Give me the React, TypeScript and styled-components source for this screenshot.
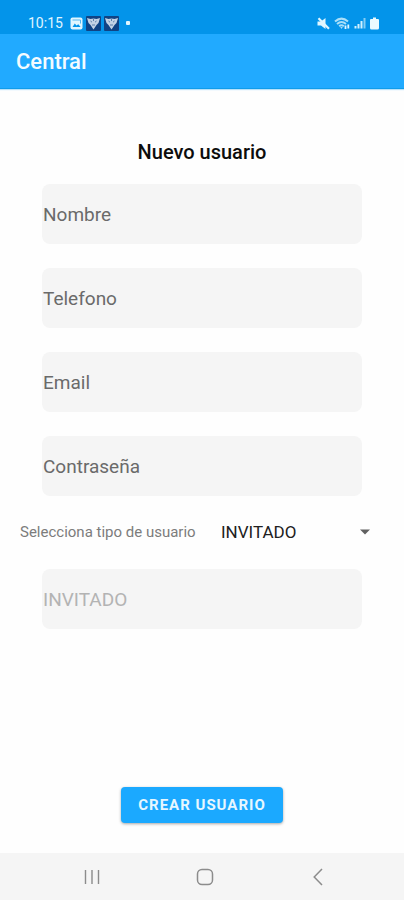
import React, { useState } from "react";
import styled, { createGlobalStyle } from "styled-components";

const GlobalStyle = createGlobalStyle`
  *, *::before, *::after { box-sizing: border-box; }
  body { margin: 0; background: #ffffff; font-family: Roboto, sans-serif; }
`;

const Screen = styled.div`
  display: flex;
  flex-direction: column;
  min-height: 100vh;
  background: #fefefe;
`;

const StatusBar = styled.div`
  display: flex;
  align-items: center;
  justify-content: space-between;
  height: 34px;
  padding: 12px 25px 0 28px;
  background: #0394ea;
  color: #e0f6ff;
`;

const StatusGroup = styled.div<{ $gap: number }>`
  display: flex;
  align-items: center;
  gap: ${(p) => p.$gap}px;
`;

const Clock = styled.time`
  font-size: 14px;
  line-height: 20px;
`;

const AppBar = styled.header`
  display: flex;
  align-items: center;
  height: 55px;
  padding: 2px 16px 0;
  background: #21aaff;
  border-bottom: 1px solid #109cea;
  box-shadow: 0 1px 1px #b5e2fb;
`;

const AppTitle = styled.h1`
  margin: 0;
  color: #f4fbff;
  font-size: 22px;
  line-height: 28px;
  font-weight: 500;
`;

const Form = styled.form`
  display: flex;
  flex: 1;
  flex-direction: column;
  align-items: center;
  padding: 51px 0 30px;
`;

const FormTitle = styled.h2`
  margin: 0 0 20px;
  color: #0c0c0c;
  font-size: 20px;
  line-height: 24px;
  font-weight: 500;
`;

const FieldStack = styled.div`
  display: flex;
  flex-direction: column;
  gap: 24px;
  width: 100%;
  padding: 0 42px;
`;

const Field = styled.input`
  width: 100%;
  height: 60px;
  padding: 0 0 0 1px;
  border: 0;
  border-radius: 8px;
  background: #f5f5f5;
  color: #333333;
  font-family: inherit;
  font-size: 19px;

  &::placeholder { color: #6a6a6a; opacity: 1; }
  &:disabled { color: #b3b3b3; }
`;

const TypeRow = styled.div`
  display: flex;
  align-items: center;
  width: 100%;
  height: 73px;
  padding: 0 34px 2px 20px;
`;

const TypeLabel = styled.label`
  flex: none;
  width: 201px;
  color: #7c7c7c;
  font-size: 15px;
  line-height: 20px;
  white-space: nowrap;
`;

const SelectBox = styled.div`
  display: flex;
  flex: 1;
  align-items: center;
  min-width: 0;

  svg { flex: none; margin-left: -12px; pointer-events: none; }
`;

const Select = styled.select`
  flex: 1;
  min-width: 0;
  height: 28px;
  padding: 0 12px 0 0;
  border: 0;
  appearance: none;
  background: transparent;
  color: #202020;
  font-family: inherit;
  font-size: 17px;
`;

const SubmitButton = styled.button`
  height: 36px;
  margin-top: auto;
  padding: 0 17px;
  border: 0;
  border-radius: 4px;
  background: #1ba9ff;
  box-shadow: 0 1px 3px rgba(0, 0, 0, 0.35);
  color: #e6f7ff;
  font-family: inherit;
  font-size: 15px;
  font-weight: 700;
  letter-spacing: 1px;
`;

const NavBar = styled.nav`
  display: grid;
  grid-template-columns: repeat(3, 1fr);
  height: 47px;
  padding: 0 30px 0 35px;
  background: #f5f5f5;
`;

const NavButton = styled.button`
  display: grid;
  place-items: center;
  padding: 0;
  border: 0;
  background: transparent;
  color: #8c8c8c;
`;

const PictureIcon = () => (
  <svg width="13" height="13" viewBox="0 0 13 13" aria-hidden="true">
    <rect x="0.5" y="0.5" width="12" height="12" rx="2" fill="#e0f6ff" />
    <path d="M2.5 10 4.8 6.5 6.5 8.5 8.3 7.2 10.6 10Z" fill="#0394ea" />
    <path d="M2.5 3H10.5V6.5" fill="none" stroke="#57b7f0" />
  </svg>
);

const ShieldIcon = () => (
  <svg width="15" height="15" viewBox="0 0 15 15" aria-hidden="true">
    <rect width="15" height="15" rx="1" fill="#104384" />
    <path d="M1 2 4.5 3 7.5 2.5 10.5 3 14 2 12.5 7 10.5 9 7.5 13.5 4.5 9 2.5 7Z" fill="#c3d2e5" />
    <path d="M4.5 5 6 6.2M10.5 5 9 6.2M6 9H9M7.5 3V5" stroke="#5a7fa9" />
  </svg>
);

const DotIcon = () => (
  <svg width="4" height="4" viewBox="0 0 4 4" aria-hidden="true">
    <rect width="4" height="4" rx="1" fill="#e0f6ff" />
  </svg>
);

const MutedIcon = () => (
  <svg width="13" height="13" viewBox="0 0 13 13" aria-hidden="true">
    <path d="M0.5 4.5H4L8.5 1V12L4 8.5H0.5Z" fill="#e0f6ff" />
    <path d="M1.5 1.2 12 11.7" stroke="#e0f6ff" strokeWidth="2.2" />
  </svg>
);

const WifiIcon = () => (
  <svg width="16" height="13" viewBox="0 0 16 13" fill="none" aria-hidden="true">
    <path d="M1 4.5Q7.5-1.2 14 4.5M3 7Q7.5 3 12 7M5.2 9.3Q7.5 7.3 9.8 9.3" stroke="#a9dff9" strokeWidth="2" />
    <path d="M6.2 10.2H8.8L7.5 11.8Z" fill="#e0f6ff" />
    <path d="M11.5 8.5V12M14.3 7.5V11.5" stroke="#e0f6ff" strokeWidth="1.8" />
  </svg>
);

const SignalIcon = () => (
  <svg width="12" height="12" viewBox="0 0 12 12" aria-hidden="true">
    <path d="M1.5 9V11.5M4.5 7V11.5M7.5 4V11.5" stroke="#d2f1ff" strokeWidth="2" />
    <path d="M10.5 1V11.5" stroke="#83cdf5" strokeWidth="2" />
  </svg>
);

const BatteryIcon = () => (
  <svg width="9" height="13" viewBox="0 0 9 13" aria-hidden="true">
    <path d="M3 0.5H6V2H8Q9 2 9 3V11Q9 12.5 7.5 12.5H1.5Q0 12.5 0 11V3Q0 2 1 2H3Z" fill="#eafaff" />
  </svg>
);

const CaretIcon = () => (
  <svg width="10" height="6" viewBox="0 0 10 6" aria-hidden="true">
    <path d="M0 0.5H10L5 5.5Z" fill="#616161" />
  </svg>
);

const RecentsIcon = () => (
  <svg width="16" height="16" viewBox="0 0 16 16" stroke="currentColor" strokeWidth="1.4" aria-hidden="true">
    <path d="M1.5 1V15M8 1V15M14.5 1V15" />
  </svg>
);

const HomeIcon = () => (
  <svg width="18" height="18" viewBox="0 0 18 18" fill="none" stroke="currentColor" strokeWidth="1.5" aria-hidden="true">
    <rect x="1.5" y="1.5" width="15" height="15" rx="4.5" />
  </svg>
);

const BackIcon = () => (
  <svg width="10" height="18" viewBox="0 0 10 18" fill="none" stroke="currentColor" strokeWidth="1.5" aria-hidden="true">
    <path d="M9 1 1.2 9 9 17" />
  </svg>
);

const fields = [
  { label: "Nombre", type: "text" },
  { label: "Telefono", type: "tel" },
  { label: "Email", type: "email" },
  { label: "Contraseña", type: "password" },
];

export default function App() {
  const [userType, setUserType] = useState("INVITADO");

  return (
    <Screen>
      <GlobalStyle />
      <StatusBar>
        <StatusGroup $gap={7}>
          <Clock>10:15</Clock>
          <StatusGroup $gap={3}>
            <PictureIcon />
            <ShieldIcon />
            <ShieldIcon />
          </StatusGroup>
          <DotIcon />
        </StatusGroup>
        <StatusGroup $gap={4}>
          <MutedIcon />
          <WifiIcon />
          <SignalIcon />
          <BatteryIcon />
        </StatusGroup>
      </StatusBar>
      <AppBar>
        <AppTitle>Central</AppTitle>
      </AppBar>
      <Form onSubmit={(event: React.FormEvent) => event.preventDefault()}>
        <FormTitle>Nuevo usuario</FormTitle>
        <FieldStack>
          {fields.map((field) => (
            <Field key={field.label} type={field.type} placeholder={field.label} aria-label={field.label} />
          ))}
        </FieldStack>
        <TypeRow>
          <TypeLabel htmlFor="user-type">Selecciona tipo de usuario</TypeLabel>
          <SelectBox>
            <Select id="user-type" value={userType} onChange={(event) => setUserType(event.target.value)}>
              <option>INVITADO</option>
            </Select>
            <CaretIcon />
          </SelectBox>
        </TypeRow>
        <FieldStack>
          <Field type="text" value={userType} aria-label="Tipo de usuario" disabled readOnly />
        </FieldStack>
        <SubmitButton type="submit">CREAR USUARIO</SubmitButton>
      </Form>
      <NavBar>
        <NavButton type="button" aria-label="Recientes"><RecentsIcon /></NavButton>
        <NavButton type="button" aria-label="Inicio"><HomeIcon /></NavButton>
        <NavButton type="button" aria-label="Atrás"><BackIcon /></NavButton>
      </NavBar>
    </Screen>
  );
}
